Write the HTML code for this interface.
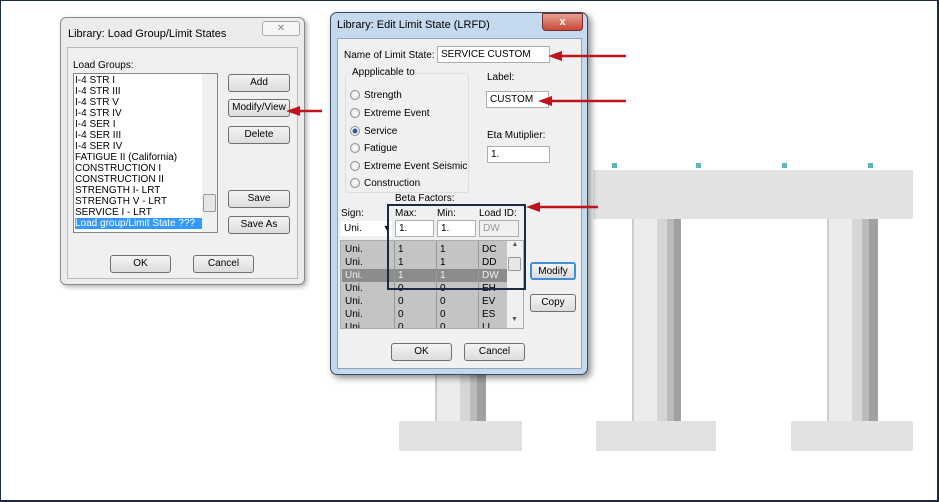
<!DOCTYPE html>
<html><head><meta charset="utf-8"><style>
*{box-sizing:border-box;margin:0;padding:0}
body{width:939px;height:502px;position:relative;overflow:hidden;background:#fff;font-family:"Liberation Sans",sans-serif;font-size:10px;color:#000}
.a{position:absolute}
.frame{left:0;top:0;width:939px;height:502px;border:2px solid #1c2b44;border-top-width:1px;border-left-width:1px}
.g{background:#e2e2e2}
.btn{position:absolute;border:1px solid #707070;border-radius:3px;background:linear-gradient(#f4f4f4,#dcdcdc);text-align:center;font-size:10px;line-height:16px}
.inp{position:absolute;background:#fff;border:1px solid #abadb3;font-size:10px;padding-left:3px}
.lbl{position:absolute;font-size:10px;white-space:nowrap}
.rad{position:absolute;width:10px;height:10px;border-radius:50%;border:1px solid #8e8f8f;background:radial-gradient(#fff,#ddd)}
.row{position:absolute;left:342px;width:165px;height:13px;font-size:10px;line-height:13px}
.row span{position:absolute}
</style></head><body>
<!-- background structure -->
<div class="a g" style="left:593px;top:170px;width:320px;height:49px"></div>
<div class="a" style="left:632px;top:219px;width:49px;height:202px;background:linear-gradient(90deg,#ccc 0 2px,#ececec 2px 25px,#d6d6d6 25px 35px,#bbb 35px 42px,#a0a0a0 42px)"></div>
<div class="a" style="left:827px;top:219px;width:51px;height:202px;background:linear-gradient(90deg,#ccc 0 2px,#ececec 2px 25px,#d6d6d6 25px 35px,#bbb 35px 42px,#a0a0a0 42px)"></div>
<div class="a" style="left:435px;top:370px;width:51px;height:51px;background:linear-gradient(90deg,#ccc 0 2px,#ececec 2px 25px,#d6d6d6 25px 35px,#bbb 35px 42px,#a0a0a0 42px)"></div>
<div class="a g" style="left:596px;top:421px;width:120px;height:30px"></div>
<div class="a g" style="left:791px;top:421px;width:122px;height:30px"></div>
<div class="a g" style="left:399px;top:421px;width:123px;height:30px"></div>
<div class="a" style="left:612px;top:163px;width:5px;height:5px;background:#5fb7b7"></div>
<div class="a" style="left:696px;top:163px;width:5px;height:5px;background:#5fb7b7"></div>
<div class="a" style="left:782px;top:163px;width:5px;height:5px;background:#5fb7b7"></div>
<div class="a" style="left:868px;top:163px;width:5px;height:5px;background:#5fb7b7"></div>

<!-- dialog 1 -->
<div class="a" style="left:60px;top:17px;width:245px;height:268px;border:1px solid #8a8a8a;border-radius:6px;background:#ececec;box-shadow:2px 2px 5px rgba(0,0,0,.3)"></div>
<div class="lbl" style="left:68px;top:28px;font-size:11px">Library: Load Group/Limit States</div>
<div class="a" style="left:262px;top:21px;width:38px;height:15px;border:1px solid #aaa;border-radius:3px;background:#f6f6f6;color:#888;text-align:center;font-size:10px;line-height:13px">✕</div>
<div class="a" style="left:67px;top:47px;width:231px;height:232px;border:1px solid #bbb;background:#f0f0f0"></div>
<div class="lbl" style="left:73px;top:60px">Load Groups:</div>
<div class="a" style="left:73px;top:73px;width:145px;height:160px;background:#fff;border:1px solid #828790"></div>
<div class="a" style="left:75px;top:75px;width:127px;font-size:10px;line-height:11px;white-space:nowrap">I-4 STR I<br>I-4 STR III<br>I-4 STR V<br>I-4 STR IV<br>I-4 SER I<br>I-4 SER III<br>I-4 SER IV<br>FATIGUE II (California)<br>CONSTRUCTION I<br>CONSTRUCTION II<br>STRENGTH I- LRT<br>STRENGTH V - LRT<br>SERVICE I - LRT<br><span style="display:block;background:#3399ff;color:#fff">Load group/Limit State ???</span></div>
<div class="a" style="left:202px;top:74px;width:15px;height:158px;background:#f0f0f0"></div>
<div class="a" style="left:203px;top:194px;width:13px;height:18px;border:1px solid #999;border-radius:2px;background:#e6e6e6"></div>
<div class="btn" style="left:228px;top:74px;width:62px;height:18px">Add</div>
<div class="btn" style="left:228px;top:99px;width:62px;height:18px">Modify/View</div>
<div class="btn" style="left:228px;top:126px;width:62px;height:18px">Delete</div>
<div class="btn" style="left:228px;top:190px;width:62px;height:18px">Save</div>
<div class="btn" style="left:228px;top:216px;width:62px;height:18px">Save As</div>
<div class="btn" style="left:110px;top:255px;width:61px;height:18px">OK</div>
<div class="btn" style="left:193px;top:255px;width:61px;height:18px">Cancel</div>

<!-- dialog 2 -->
<div class="a" style="left:330px;top:12px;width:258px;height:363px;border:1px solid #3a4a60;border-radius:7px;background:#c4d8ee;box-shadow:3px 3px 7px rgba(0,0,0,.45)"></div>
<div class="lbl" style="left:337px;top:19px;font-size:11px">Library: Edit Limit State (LRFD)</div>
<div class="a" style="left:542px;top:13px;width:41px;height:18px;border:1px solid #7a2a2a;border-radius:0 0 4px 4px;background:linear-gradient(#e8a090,#c84a3a);color:#fff;text-align:center;font-weight:bold;font-size:11px;line-height:16px">x</div>
<div class="a" style="left:337px;top:38px;width:245px;height:331px;border:1px solid #8ea4c0;background:#f0f0f0"></div>
<div class="lbl" style="left:344px;top:50px">Name of Limit State:</div>
<div class="inp" style="left:437px;top:46px;width:113px;height:17px;line-height:15px">SERVICE CUSTOM</div>
<div class="a" style="left:345px;top:73px;width:124px;height:120px;border:1px solid #d5dfe5;border-radius:3px"></div>
<div class="lbl" style="left:350px;top:67px;background:#f0f0f0;padding:0 2px">Appplicable to</div>
<div class="rad" style="left:350px;top:90px"></div><div class="lbl" style="left:364px;top:90px">Strength</div>
<div class="rad" style="left:350px;top:108px"></div><div class="lbl" style="left:364px;top:108px">Extreme Event</div>
<div class="rad" style="left:350px;top:126px;background:radial-gradient(#2a5c9a 0 2px,#fff 3px,#ddd)"></div><div class="lbl" style="left:364px;top:126px">Service</div>
<div class="rad" style="left:350px;top:143px"></div><div class="lbl" style="left:364px;top:143px">Fatigue</div>
<div class="rad" style="left:350px;top:161px"></div><div class="lbl" style="left:364px;top:161px">Extreme Event Seismic</div>
<div class="rad" style="left:350px;top:178px"></div><div class="lbl" style="left:364px;top:178px">Construction</div>
<div class="lbl" style="left:487px;top:72px">Label:</div>
<div class="inp" style="left:486px;top:91px;width:63px;height:17px;line-height:15px">CUSTOM</div>
<div class="lbl" style="left:487px;top:130px">Eta Mutiplier:</div>
<div class="inp" style="left:487px;top:146px;width:63px;height:17px;line-height:15px">1.</div>
<div class="lbl" style="left:395px;top:193px">Beta Factors:</div>
<div class="lbl" style="left:341px;top:208px">Sign:</div>
<div class="lbl" style="left:395px;top:208px">Max:</div>
<div class="lbl" style="left:437px;top:208px">Min:</div>
<div class="lbl" style="left:479px;top:208px">Load ID:</div>
<div class="inp" style="left:340px;top:220px;width:53px;height:17px;line-height:15px;border-color:#f0f0f0">Uni.<span style="position:absolute;right:2px;font-size:7px">▼</span></div>
<div class="inp" style="left:395px;top:220px;width:39px;height:17px;line-height:15px">1.</div>
<div class="inp" style="left:437px;top:220px;width:39px;height:17px;line-height:15px">1.</div>
<div class="inp" style="left:479px;top:220px;width:40px;height:17px;line-height:15px;background:#f0f0f0;color:#999">DW</div>
<div class="a" style="left:340px;top:240px;width:184px;height:89px;border:1px solid #abadb3;background:#c4c4c4;overflow:hidden">
</div>
<div class="a" style="left:342px;top:241px;width:165px;height:87px;overflow:hidden">
<div class="row" style="left:0;top:2px"><span style="left:3px">Uni.</span><span style="left:56px">1</span><span style="left:98px">1</span><span style="left:140px">DC</span></div>
<div class="row" style="left:0;top:15px"><span style="left:3px">Uni.</span><span style="left:56px">1</span><span style="left:98px">1</span><span style="left:140px">DD</span></div>
<div class="row" style="left:0;top:28px;background:#8c8c8c;color:#eee"><span style="left:3px">Uni.</span><span style="left:56px">1</span><span style="left:98px">1</span><span style="left:140px">DW</span></div>
<div class="row" style="left:0;top:41px"><span style="left:3px">Uni.</span><span style="left:56px">0</span><span style="left:98px">0</span><span style="left:140px">EH</span></div>
<div class="row" style="left:0;top:54px"><span style="left:3px">Uni.</span><span style="left:56px">0</span><span style="left:98px">0</span><span style="left:140px">EV</span></div>
<div class="row" style="left:0;top:67px"><span style="left:3px">Uni.</span><span style="left:56px">0</span><span style="left:98px">0</span><span style="left:140px">ES</span></div>
<div class="row" style="left:0;top:80px"><span style="left:3px">Uni.</span><span style="left:56px">0</span><span style="left:98px">0</span><span style="left:140px">LL</span></div>
<div class="a" style="left:52px;top:0;width:1px;height:87px;background:#999"></div>
<div class="a" style="left:94px;top:0;width:1px;height:87px;background:#999"></div>
<div class="a" style="left:136px;top:0;width:1px;height:87px;background:#999"></div>
</div>
<div class="a" style="left:507px;top:241px;width:16px;height:87px;background:#f0f0f0;font-size:7px;color:#555;text-align:center">▲</div>
<div class="a" style="left:508px;top:257px;width:13px;height:14px;border:1px solid #999;border-radius:2px;background:#e8e8e8"></div>
<div class="a" style="left:511px;top:316px;font-size:7px;color:#555">▼</div>
<div class="btn" style="left:530px;top:262px;width:46px;height:18px;border:2px solid #3c8fd8">Modify</div>
<div class="btn" style="left:530px;top:294px;width:46px;height:18px">Copy</div>
<div class="btn" style="left:391px;top:343px;width:61px;height:18px">OK</div>
<div class="btn" style="left:464px;top:343px;width:61px;height:18px">Cancel</div>
<div class="a" style="left:387px;top:204px;width:139px;height:86px;border:2px solid #1c2b44"></div>

<!-- arrows -->
<svg class="a" style="left:0;top:0" width="939" height="502">
<g stroke="#c0141c" stroke-width="2.5" fill="#c0141c">
<line x1="626" y1="56" x2="560" y2="56"/><polygon points="548,56 562,51 562,61" stroke="none"/>
<line x1="626" y1="101" x2="550" y2="101"/><polygon points="538,101 552,96 552,106" stroke="none"/>
<line x1="598" y1="207" x2="538" y2="207"/><polygon points="526,207 540,202 540,212" stroke="none"/>
<line x1="322" y1="111" x2="298" y2="111"/><polygon points="286,111 300,106 300,116" stroke="none"/>
</g></svg>
<div class="a frame"></div>
</body></html>
